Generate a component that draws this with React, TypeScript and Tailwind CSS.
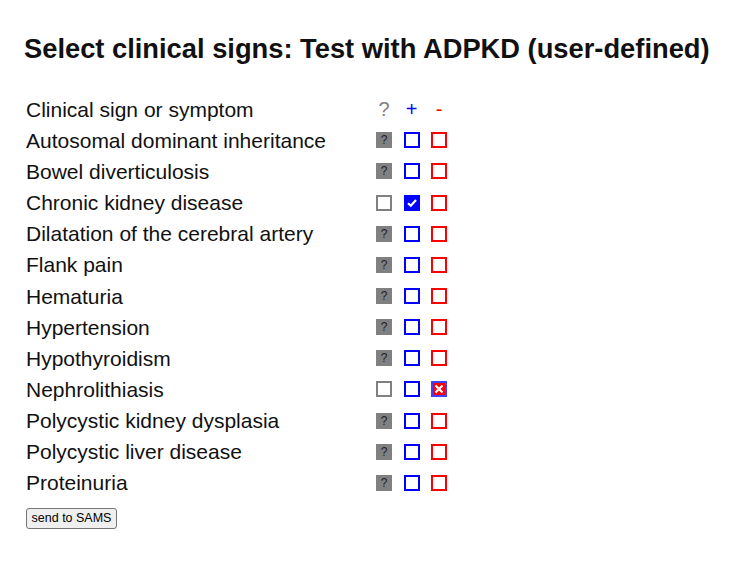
import React from "react";

const rows: { label: string; state: "q" | "plus" | "minus" }[] = [
  { label: "Autosomal dominant inheritance", state: "q" },
  { label: "Bowel diverticulosis", state: "q" },
  { label: "Chronic kidney disease", state: "plus" },
  { label: "Dilatation of the cerebral artery", state: "q" },
  { label: "Flank pain", state: "q" },
  { label: "Hematuria", state: "q" },
  { label: "Hypertension", state: "q" },
  { label: "Hypothyroidism", state: "q" },
  { label: "Nephrolithiasis", state: "minus" },
  { label: "Polycystic kidney dysplasia", state: "q" },
  { label: "Polycystic liver disease", state: "q" },
  { label: "Proteinuria", state: "q" },
];

function QBox() {
  return (
    <div className="w-[16px] h-[16px] bg-[#808080] flex items-center justify-center text-[12px] leading-none text-[#222]">
      ?
    </div>
  );
}
function Empty({ color }: { color: string }) {
  return <div className={`w-[16px] h-[16px] border-2 ${color}`} />;
}
function Checked() {
  return (
    <div className="w-[16px] h-[16px] bg-[#0000ff] flex items-center justify-center">
      <svg width="12" height="12" viewBox="0 0 12 12">
        <path d="M2 6.3 L4.8 8.8 L10 3" stroke="white" strokeWidth="2.2" fill="none" />
      </svg>
    </div>
  );
}
function Crossed() {
  return (
    <div className="w-[16px] h-[16px] border-2 border-[#4040ff] bg-[#ff0000] flex items-center justify-center">
      <svg width="12" height="12" viewBox="0 0 12 12">
        <path d="M2.5 2.5 L9.5 9.5 M9.5 2.5 L2.5 9.5" stroke="white" strokeWidth="2.2" fill="none" />
      </svg>
    </div>
  );
}

function Cell({ children }: { children: React.ReactNode }) {
  return <div className="w-[27.5px] flex items-center justify-center">{children}</div>;
}

export default function App() {
  return (
    <div className="w-[739px] h-[568px] bg-white text-black" style={{ fontFamily: '"Liberation Sans", Arial, sans-serif' }}>
      <div className="pl-[24px] pt-[33px]">
        <h2 className="text-[27.3px] font-bold leading-[32px] text-[#111]">
          Select clinical signs: Test with ADPKD (user-defined)
        </h2>
      </div>
      <div className="pl-[26px] pt-[28.5px] text-[21px] text-[#111]">
        <div className="flex h-[31.17px] items-center">
          <div className="w-[344.25px] pt-[0.5px]">Clinical sign or symptom</div>
          <Cell><span className="text-[#808080] text-[20px]">?</span></Cell>
          <Cell><span className="text-[#0000ff] text-[20px]">+</span></Cell>
          <Cell><span className="text-[#ff0000] text-[20px]">-</span></Cell>
        </div>
        {rows.map((r) => (
          <div key={r.label} className="flex h-[31.17px] items-center">
            <div className="w-[344.25px] whitespace-nowrap pt-[0.5px]">{r.label}</div>
            <Cell>{r.state === "q" ? <QBox /> : <Empty color="border-[#808080]" />}</Cell>
            <Cell>{r.state === "plus" ? <Checked /> : <Empty color="border-[#0000ff]" />}</Cell>
            <Cell>{r.state === "minus" ? <Crossed /> : <Empty color="border-[#ff0000]" />}</Cell>
          </div>
        ))}
        <div className="flex pt-[9.5px]">
          <button className="h-[21px] w-[91px] text-[12.5px] leading-none border border-[#767676] rounded-[3px] bg-[#efefef] text-black">
            send to SAMS
          </button>
        </div>
      </div>
    </div>
  );
}
